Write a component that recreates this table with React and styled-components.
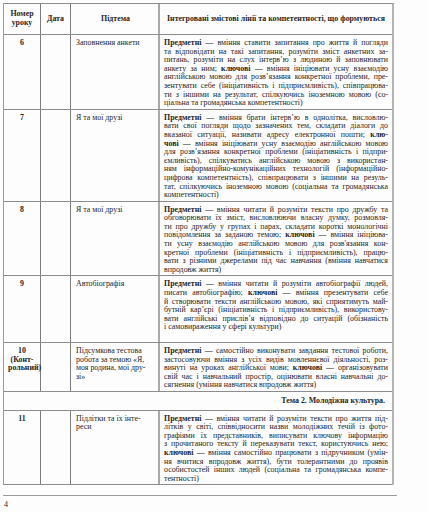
import React from 'react';
import styled, { createGlobalStyle } from 'styled-components';

const GlobalStyle = createGlobalStyle`
  html, body {
    margin: 0;
    padding: 0;
    background: #fdfdfd;
  }
  body {
    font-family: "Liberation Serif", "DejaVu Serif", serif;
    color: #262626;
  }
`;

const Page = styled.div`
  width: 428px;
  height: 512px;
  padding: 3px 0 0 3px;
  box-sizing: border-box;
  overflow: hidden;
`;

const Table = styled.div`
  width: 388px;
  border-top: 1px solid #8c8c8c;
  border-left: 1px solid #9a9a9a;
  border-right: 2px solid #b4b4b4;
`;

const Row = styled.div`
  display: grid;
  grid-template-columns: 37px 30px 89px 1fr;
  border-bottom: 1px solid #8c8c8c;
`;

const Cell = styled.div`
  padding: ${(p) => (p.$head ? '0 3px' : '4px 4px 1px 4px')};
  border-right: 1px solid #7c7c7c;
  font-size: 7.9px;
  line-height: 8.6px;
  font-weight: ${(p) => (p.$bold ? 700 : 400)};
  text-align: ${(p) => (p.$center ? 'center' : 'left')};
  ${(p) =>
    p.$head &&
    `
    display: flex;
    align-items: center;
    justify-content: center;
    height: 30px;
  `}
`;

const TopicCell = styled(Cell)`
  padding-left: 5px;
  border-right: 2px solid #a9a9a9;
`;

const ContentCell = styled.div`
  padding: ${(p) => (p.$head ? '0 4px' : `4px 4px ${1 + (p.$extra || 0)}px 4px`)};
  font-size: 7.9px;
  line-height: 8.6px;
  font-weight: ${(p) => (p.$bold ? 700 : 400)};
  ${(p) =>
    p.$head &&
    `
    display: flex;
    align-items: center;
    justify-content: center;
    height: 30px;
  `}
`;

const Line = styled.div`
  white-space: nowrap;
  text-align: ${(p) => (p.$last ? 'inherit' : 'justify')};
  text-align-last: ${(p) => (p.$last ? 'auto' : 'justify')};
`;

const ThemeRow = styled.div`
  border-bottom: 1px solid #8c8c8c;
  padding: 5px 7px 4px;
  font-size: 7.9px;
  line-height: 8.6px;
  font-weight: 700;
  text-align: right;
`;

const Footer = styled.div`
  width: 393px;
  margin-top: 10px;
  border-top: 1px solid #9a9a9a;
  padding: 4px 0 0 1px;
  font-size: 8px;
  line-height: 9px;
`;

function Rich({ text }) {
  // *слово* -> bold
  const parts = text.split('*');
  return parts.map((p, i) => (i % 2 ? <b key={i}>{p}</b> : <React.Fragment key={i}>{p}</React.Fragment>));
}

function Lines({ lines, justify }) {
  return lines.map((l, i) => (
    <Line key={i} $last={!justify || i === lines.length - 1}>
      <Rich text={l} />
    </Line>
  ));
}

const rows = [
  {
    num: ['6'],
    topic: ['Заповнення анкети'],
    text: [
      '*Предметні* — вміння ставити запитання про життя й погляди',
      'та відповідати на такі запитання, розуміти зміст анкетних за-',
      'питань, розуміти на слух інтерв\u2019ю з людиною й заповнювати',
      'анкету за ним; *ключові* — вміння ініціювати усну взаємодію',
      'англійською мовою для розв\u2019язання конкретної проблеми, пре-',
      'зентувати себе (ініціативність і підприємливість), співпрацюва-',
      'ти з іншими на результат, спілкуючись іноземною мовою (со-',
      'ціальна та громадянська компетентності)',
    ],
  },
  {
    num: ['7'],
    topic: ['Я та мої друзі'],
    text: [
      '*Предметні* — вміння брати інтерв\u2019ю в однолітка, висловлю-',
      'вати свої погляди щодо зазначених тем, складати діалоги до',
      'вказаної ситуації, називати адресу електронної пошти; *клю-*',
      '*чові* — вміння ініціювати усну взаємодію англійською мовою',
      'для розв\u2019язання конкретної проблеми (ініціативність і підпри-',
      'ємливість), спілкуватись англійською мовою з використан-',
      'ням інформаційно-комунікаційних технологій (інформаційно-',
      'цифрова компетентність), співпрацювати з іншими на резуль-',
      'тат, спілкуючись іноземною мовою (соціальна та громадянська',
      'компетентності)',
    ],
  },
  {
    num: ['8'],
    topic: ['Я та мої друзі'],
    text: [
      '*Предметні* — вміння читати й розуміти тексти про дружбу та',
      'обговорювати їх зміст, висловлюючи власну думку, розмовля-',
      'ти про дружбу у групах і парах, складати короткі монологічні',
      'повідомлення за заданою темою; *ключові* — вміння ініціюва-',
      'ти усну взаємодію англійською мовою для розв\'язання кон-',
      'кретної проблеми (ініціативність і підприємливість), працю-',
      'вати з різними джерелами під час навчання (вміння навчатися',
      'впродовж життя)',
    ],
  },
  {
    num: ['9'],
    topic: ['Автобіографія'],
    extra: 9,
    text: [
      '*Предметні* — вміння читати й розуміти автобіографії людей,',
      'писати автобіографію; *ключові* — вміння презентувати себе',
      'й створювати тексти англійською мовою, які сприятимуть май-',
      'бутній кар\u2019єрі (ініціативність і підприємливість), використову-',
      'вати англійські прислів\u2019я відповідно до ситуацій (обізнаність',
      'і самовираження у сфері культури)',
    ],
  },
  {
    num: ['10', '(Конт-', 'рольний)'],
    topic: ['Підсумкова тестова', 'робота за темою «Я,', 'моя родина, мої дру-', 'зі»'],
    text: [
      '*Предметні* — самостійно виконувати завдання тестової роботи,',
      'застосовуючи вміння з усіх видів мовленнєвої діяльності, роз-',
      'винуті на уроках англійської мови; *ключові* — організовувати',
      'свій час і навчальний простір, оцінювати власні навчальні до-',
      'сягнення (уміння навчатися впродовж життя)',
    ],
  },
  { theme: 'Тема 2. Молодіжна культура.' },
  {
    num: ['11'],
    topic: ['Підлітки та їх інте-', 'реси'],
    text: [
      '*Предметні* — вміння читати й розуміти тексти про життя під-',
      'літків у світі, співвідносити назви молодіжних течій із фото-',
      'графіями їх представників, виписувати ключову інформацію',
      'з прочитаного тексту й переказувати текст, користуючись нею;',
      '*ключові* — вміння самостійно працювати з підручником (умін-',
      'ня вчитися впродовж життя), бути толерантними до проявів',
      'особистостей інших людей (соціальна та громадянська компе-',
      'тентності)',
    ],
  },
];

export default function App() {
  return (
    <>
      <GlobalStyle />
      <Page>
        <Table>
          <Row>
            <Cell $head $bold $center>
              Номер
              <br />
              уроку
            </Cell>
            <Cell $head $bold $center>Дата</Cell>
            <TopicCell $head $bold $center>Підтема</TopicCell>
            <ContentCell $head $bold>
              Інтегровані змістові лінії та компетентності, що формуються
            </ContentCell>
          </Row>
          {rows.map((r, i) =>
            r.theme ? (
              <ThemeRow key={i}>{r.theme}</ThemeRow>
            ) : (
              <Row key={i}>
                <Cell $bold $center>
                  <Lines lines={r.num} />
                </Cell>
                <Cell />
                <TopicCell>
                  <Lines lines={r.topic} />
                </TopicCell>
                <ContentCell $extra={r.extra}>
                  <Lines lines={r.text} justify />
                </ContentCell>
              </Row>
            )
          )}
        </Table>
        <Footer>4</Footer>
      </Page>
    </>
  );
}
